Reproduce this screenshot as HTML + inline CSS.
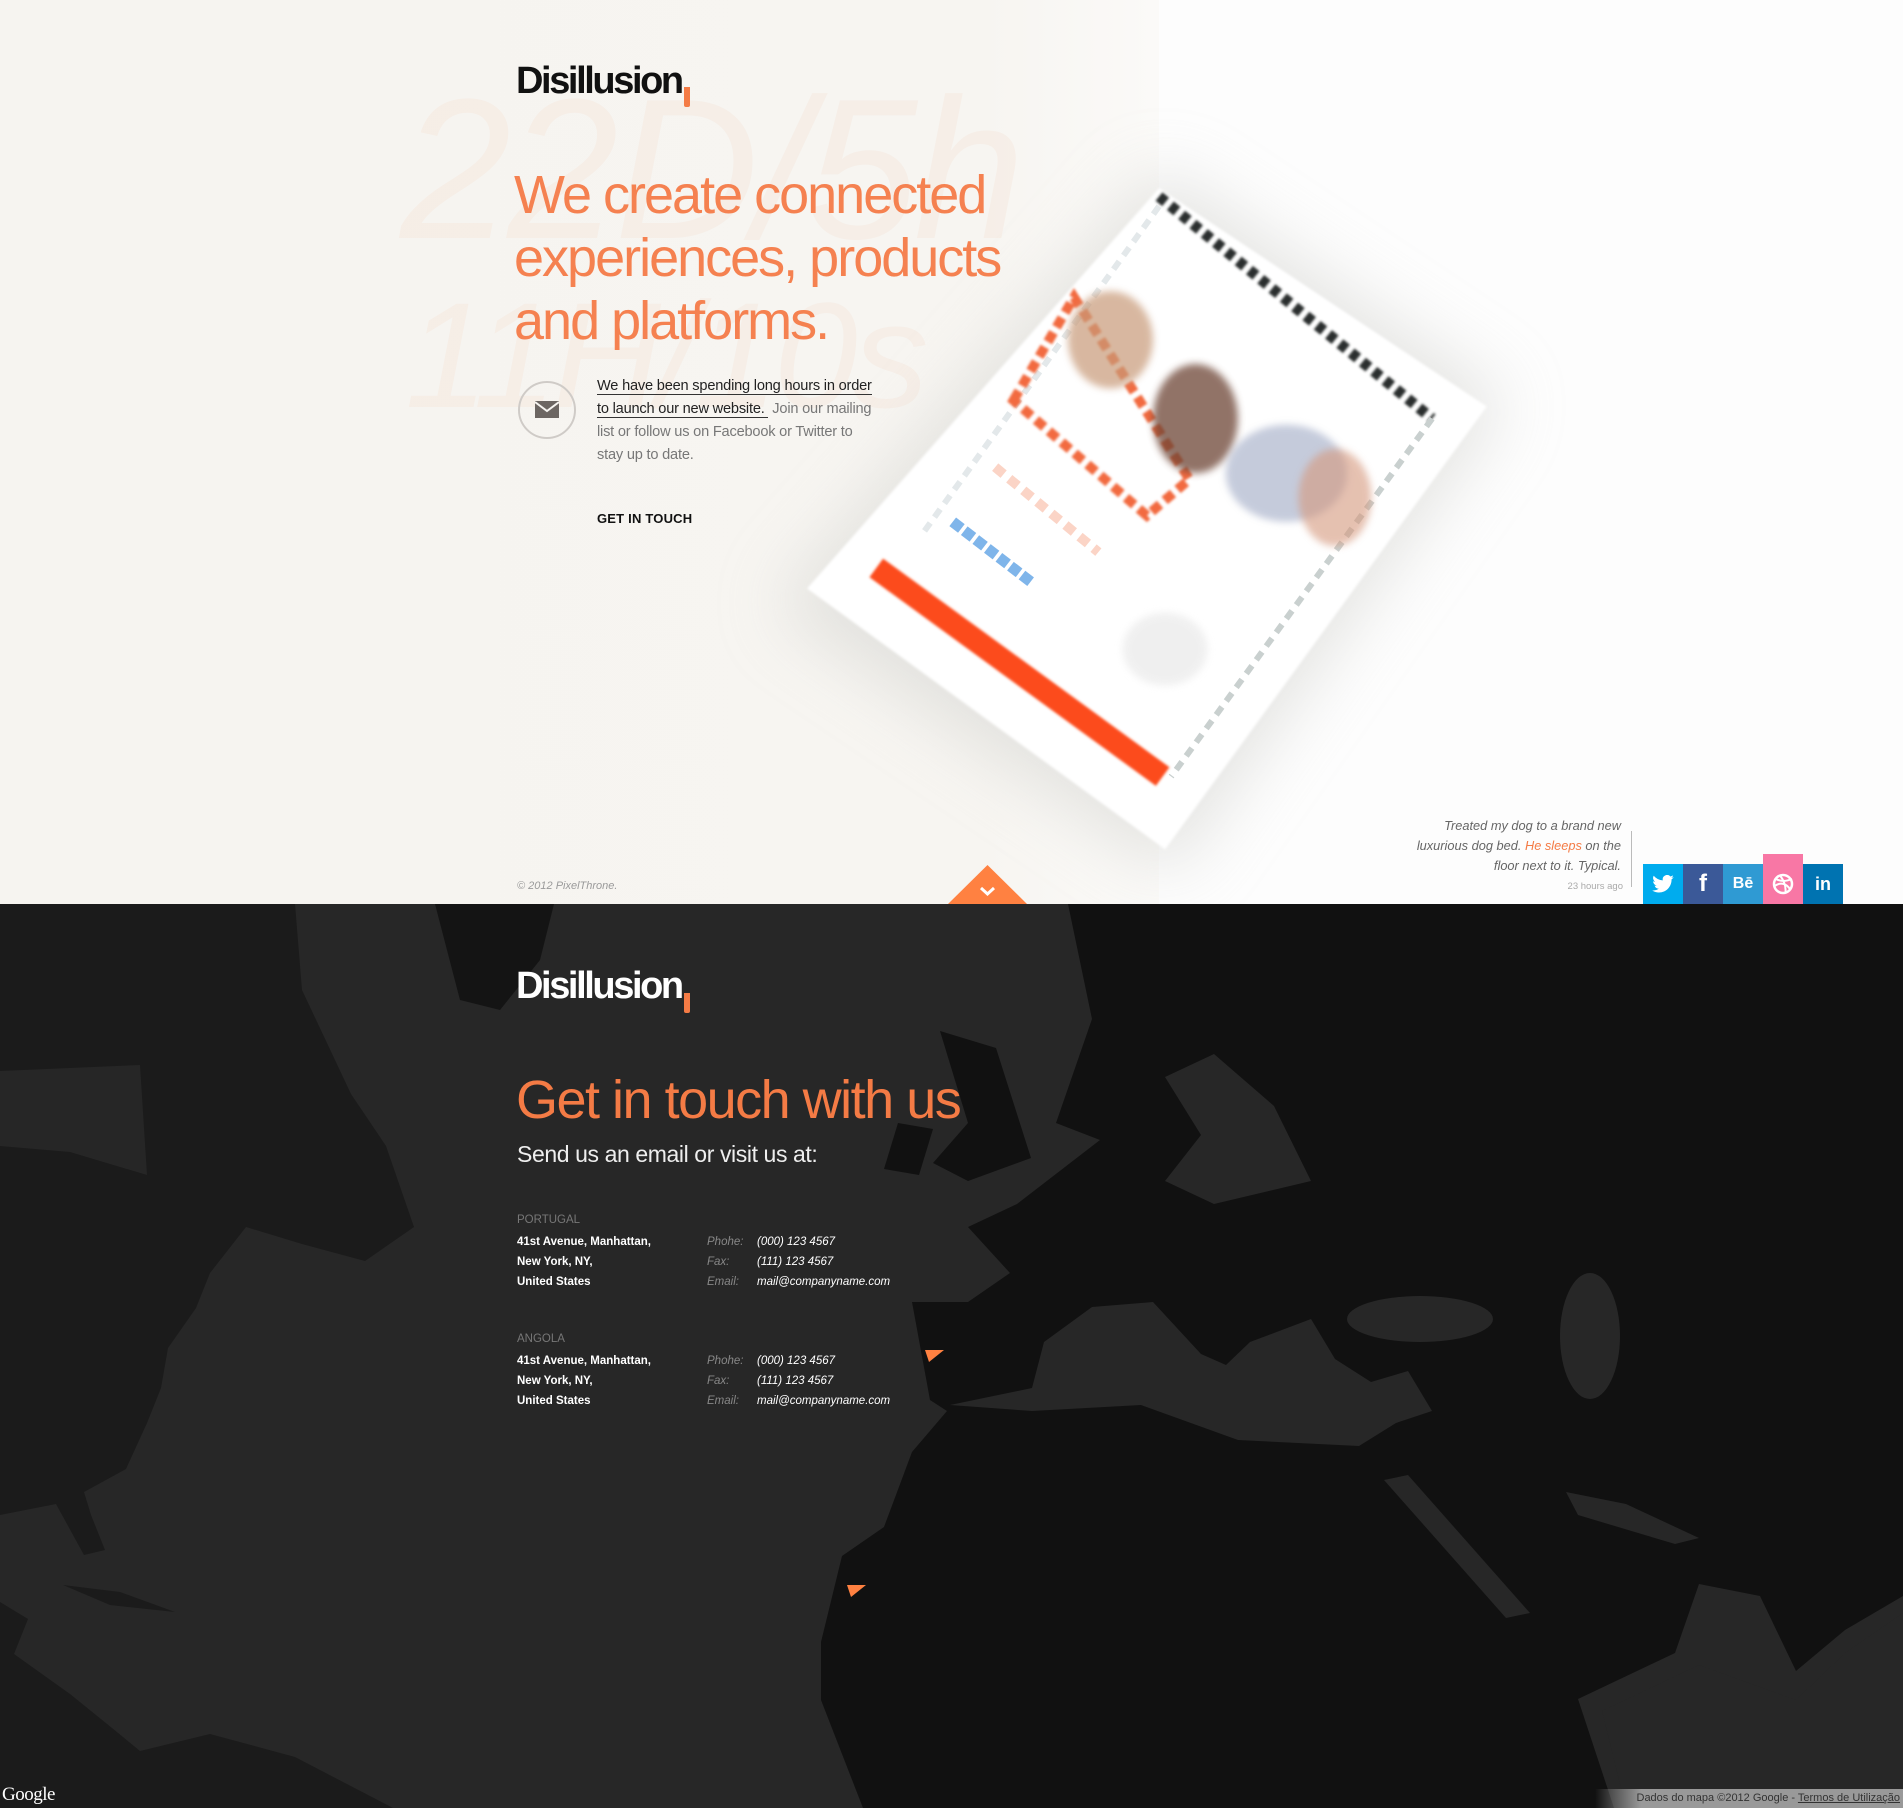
<!DOCTYPE html>
<html><head><meta charset="utf-8">
<style>
*{margin:0;padding:0;box-sizing:border-box}
html,body{width:1903px;height:1808px;overflow:hidden;background:#272727}
body{position:relative;font-family:"Liberation Sans",sans-serif}
.abs{position:absolute}
#top{position:absolute;left:0;top:0;width:1903px;height:904px;background:#fdfdfd;overflow:hidden}
.logo{font-weight:bold;font-size:38px;letter-spacing:-2.4px;line-height:1;white-space:nowrap}
.comma{position:absolute;width:6px;height:20px;background:#f47b45;border-radius:0 0 2px 2px}
.wm{position:absolute;font-style:italic;color:rgba(243,122,68,0.055);font-size:200px;line-height:1;white-space:nowrap;letter-spacing:-4px}
.h1{position:absolute;left:514px;color:#f58150;font-size:54px;letter-spacing:-2px;line-height:63px;white-space:nowrap}
.p{position:absolute;left:597px;top:375px;font-size:14.6px;line-height:23px;color:#777;letter-spacing:-0.2px;white-space:nowrap}
.p u{color:#222;text-decoration:none;border-bottom:1px solid #333}
.soc{position:absolute;width:40px;height:40px;top:864px;color:#fff;font-weight:bold;display:flex;align-items:center;justify-content:center;font-size:19px}
.tw{position:absolute;right:282px;text-align:right;font-style:italic;font-size:12.8px;color:#666;white-space:nowrap}
.lbl{position:absolute;font-size:11.5px;white-space:nowrap}
</style></head><body>

<div id="top">
  <div class="abs" style="left:0;top:0;width:1159px;height:904px;background:linear-gradient(90deg,#f6f4f0,#f7f5f1 85%,#fbfaf8)"></div>
  <div class="wm" style="left:400px;top:70px">22D/5h</div>
  <div class="wm" style="left:405px;top:280px;font-size:150px">11H/10s</div>

  <svg class="abs" style="left:0;top:0" width="1903" height="904" viewBox="0 0 1568 745" preserveAspectRatio="none">
    <defs>
      <filter id="bl" x="-50%" y="-50%" width="200%" height="200%"><feGaussianBlur stdDeviation="28"/></filter>
      <filter id="b2"><feGaussianBlur stdDeviation="3"/></filter>
      <filter id="b1"><feGaussianBlur stdDeviation="1.2"/></filter>
    </defs>
    <polygon points="955,140 1240,330 965,720 640,500" fill="#d9d9d6" opacity="0.7" filter="url(#bl)"/>
    <polygon points="955,155 1225,335 960,700 665,485" fill="#ffffff" filter="url(#b1)"/>
    <line x1="955" y1="162" x2="1180" y2="345" stroke="#2a2f2d" stroke-width="9" stroke-dasharray="7,5" filter="url(#b1)"/>
    <line x1="1180" y1="345" x2="965" y2="640" stroke="#c9d0cf" stroke-width="5" stroke-dasharray="8,6"/>
    <line x1="955" y1="170" x2="760" y2="440" stroke="#e3e8ea" stroke-width="5" stroke-dasharray="8,6"/>
    <polygon points="835,330 885,245 980,395 945,425" fill="none" stroke="#f26b3f" stroke-width="8" stroke-dasharray="9,5" filter="url(#b1)"/>
    <ellipse cx="915" cy="280" rx="35" ry="40" fill="#c89a78" opacity="0.7" filter="url(#b2)"/>
    <ellipse cx="985" cy="345" rx="35" ry="45" fill="#6d4436" opacity="0.75" filter="url(#b2)"/>
    <ellipse cx="1060" cy="390" rx="50" ry="40" fill="#9fa9c4" opacity="0.6" filter="url(#b2)"/>
    <ellipse cx="1100" cy="410" rx="30" ry="40" fill="#d5987d" opacity="0.6" filter="url(#b2)"/>
    <line x1="820" y1="385" x2="905" y2="455" stroke="#fbd4c6" stroke-width="8" stroke-dasharray="9,6"/>
    <line x1="785" y1="430" x2="850" y2="480" stroke="#7fb5ea" stroke-width="9" stroke-dasharray="9,3"/>
    <line x1="722" y1="468" x2="958" y2="640" stroke="#fc4b1c" stroke-width="19" filter="url(#b1)"/>
    <ellipse cx="960" cy="535" rx="35" ry="30" fill="#e6e6e6" opacity="0.6" filter="url(#b2)"/>
  </svg>

  <div class="abs logo" style="left:516px;top:62px;color:#111">Disillusion</div>
  <div class="comma" style="left:684px;top:87px"></div>

  <div class="h1" style="top:164px">We create connected</div>
  <div class="h1" style="top:227px">experiences, products</div>
  <div class="h1" style="top:290px">and platforms.</div>

  <div class="abs" style="left:518px;top:381px;width:58px;height:58px;border:2px solid #cfcbc7;border-radius:50%"></div>
  <svg class="abs" style="left:535px;top:401px" width="24" height="17" viewBox="0 0 24 17"><path d="M0 0H24V17H0Z" fill="#6c6662"/><path d="M0 1L12 10L24 1" fill="none" stroke="#f6f4f0" stroke-width="2"/></svg>

  <div class="p"><u>We have been spending long hours in order</u><br><u>to launch our new website.&nbsp;</u> Join our mailing<br>list or follow us on Facebook or Twitter to<br>stay up to date.</div>

  <div class="abs" style="left:597px;top:511px;font-size:13px;font-weight:bold;color:#111;letter-spacing:0.2px">GET IN TOUCH</div>
  <div class="abs" style="left:517px;top:880px;font-size:11px;font-style:italic;color:#9a9a9a">© 2012 PixelThrone.</div>

  <div class="tw" style="top:818px">Treated my dog to a brand new</div>
  <div class="tw" style="top:838px">luxurious dog bed. <span style="color:#f47b45">He sleeps</span> on the</div>
  <div class="tw" style="top:858px">floor next to it. Typical.</div>
  <div class="tw" style="top:881px;font-style:normal;font-size:9.5px;color:#aaa;right:280px">23 hours ago</div>
  <div class="abs" style="left:1631px;top:831px;width:1px;height:56px;background:#bbb"></div>

  <div class="soc" style="left:1643px;background:#00acee">
    <svg width="22" height="18" viewBox="0 0 24 20"><path d="M24 2.4a9.8 9.8 0 0 1-2.8.8A4.9 4.9 0 0 0 23.3.4a9.9 9.9 0 0 1-3.1 1.2A4.9 4.9 0 0 0 11.8 6 14 14 0 0 1 1.7.9a4.9 4.9 0 0 0 1.5 6.6A4.9 4.9 0 0 1 1 6.9a4.9 4.9 0 0 0 3.9 4.8 4.9 4.9 0 0 1-2.2.1 4.9 4.9 0 0 0 4.6 3.4A9.9 9.9 0 0 1 0 17.2 14 14 0 0 0 7.5 19.4c9.1 0 14-7.5 14-14v-.6A10 10 0 0 0 24 2.4z" fill="#fff"/></svg>
  </div>
  <div class="soc" style="left:1683px;background:#3b5998;font-size:24px">f</div>
  <div class="soc" style="left:1723px;background:#2f9ad3;font-size:16px">Bē</div>
  <div class="soc" style="left:1763px;top:854px;height:50px;background:#f877a5;padding-top:10px">
    <svg width="22" height="22" viewBox="0 0 22 22"><circle cx="11" cy="11" r="9" fill="none" stroke="#fff" stroke-width="2.5"/><path d="M4 6c5 3 11 2 16 0M2.5 13c6-4 12-3 16 4M8 2.5c4 5 6 11 5.5 17" fill="none" stroke="#fff" stroke-width="2"/></svg>
  </div>
  <div class="soc" style="left:1803px;background:#0073b1;font-size:18px">in</div>

  <svg class="abs" style="left:948px;top:865px" width="79" height="39" viewBox="0 0 79 39"><polygon points="39.5,0 79,39 0,39" fill="#ff8141"/><path d="M33 23l6.5 6 6.5-6" fill="none" stroke="#fff" stroke-width="3"/></svg>
</div>

<svg class="abs" style="left:0;top:904px" width="1903" height="904" viewBox="0 904 1903 904">
  <rect x="0" y="904" width="1903" height="904" fill="#272727"/>
  <polygon fill="#1b1b1b" points="0,904 295,904 302,990 351,1094 386,1146 414,1227 365,1261 302,1244 246,1227 210,1273 196,1308 168,1348 161,1388 147,1423 126,1469 84,1492 91,1515 105,1550 84,1555 56,1504 0,1515"/>
  <polygon fill="#262626" points="0,1071 140,1065 147,1175 70,1152 0,1146"/>
  <polygon fill="#1b1b1b" points="0,1602 28,1619 14,1654 70,1694 112,1728 140,1751 210,1734 295,1757 393,1808 0,1808"/>
  <polygon fill="#1b1b1b" points="63,1585 120,1592 175,1612 110,1605"/>
  <polygon fill="#141414" points="435,904 554,904 540,960 500,1010 460,1000"/>
  <polygon fill="#111111" points="1068,904 1903,904 1903,1596 1845,1630 1796,1671 1760,1596 1699,1584 1675,1653 1578,1699 1614,1808 863,1808 821,1700 821,1642 842,1556 884,1527 912,1452 947,1411 930,1400 912,1302 968,1302 1010,1273 968,1227 1017,1204 1100,1140 1056,1123 1092,1019"/>
  <polygon fill="#111111" points="940,1031 996,1048 1031,1158 968,1181 933,1163 968,1123"/>
  <polygon fill="#111111" points="898,1123 933,1129 919,1175 884,1169"/>
  <g fill="#272727">
    <polygon points="950,1405 1032,1388 1044,1342 1092,1307 1153,1302 1201,1354 1226,1365 1250,1342 1311,1319 1335,1359 1371,1382 1408,1371 1432,1411 1396,1423 1359,1446 1238,1440 1141,1405 1032,1411"/>
    <ellipse cx="1420" cy="1319" rx="73" ry="23"/>
    <ellipse cx="1590" cy="1336" rx="30" ry="63"/>
    <polygon points="1384,1480 1408,1475 1530,1613 1506,1618"/>
    <polygon points="1165,1077 1214,1054 1274,1106 1311,1181 1214,1204 1165,1181 1201,1135"/>
    <polygon points="1566,1492 1626,1504 1699,1538 1675,1544 1578,1515"/>
    <polygon points="1903,1613 1903,1808 1626,1808 1602,1711 1699,1665 1796,1700 1845,1653"/>
  </g>
</svg>

<div class="abs logo" style="left:516px;top:967px;color:#fff">Disillusion</div>
<div class="comma" style="left:684px;top:993px"></div>

<div class="abs" style="left:516px;top:1068px;font-size:54px;color:#f47b45;letter-spacing:-1.5px;white-space:nowrap;line-height:64px">Get in touch with us</div>
<div class="abs" style="left:517px;top:1141px;font-size:23px;color:#eee;letter-spacing:-0.4px;white-space:nowrap">Send us an email or visit us at:</div>

<div class="lbl" style="left:517px;top:1214px;color:#777">PORTUGAL</div>
<div class="lbl" style="left:517px;top:1232px;color:#fff;font-weight:bold;line-height:20px">41st Avenue, Manhattan,<br>New York, NY,<br>United States</div>
<div class="lbl" style="left:707px;top:1232px;color:#888;font-style:italic;line-height:20px">Phohe:<br>Fax:<br>Email:</div>
<div class="lbl" style="left:757px;top:1232px;color:#fff;font-style:italic;line-height:20px">(000) 123 4567<br>(111) 123 4567<br>mail@companyname.com</div>

<div class="lbl" style="left:517px;top:1333px;color:#777">ANGOLA</div>
<div class="lbl" style="left:517px;top:1351px;color:#fff;font-weight:bold;line-height:20px">41st Avenue, Manhattan,<br>New York, NY,<br>United States</div>
<div class="lbl" style="left:707px;top:1351px;color:#888;font-style:italic;line-height:20px">Phohe:<br>Fax:<br>Email:</div>
<div class="lbl" style="left:757px;top:1351px;color:#fff;font-style:italic;line-height:20px">(000) 123 4567<br>(111) 123 4567<br>mail@companyname.com</div>

<svg class="abs" style="left:925px;top:1350px" width="19" height="12"><polygon points="0,0 19,0 4,12" fill="#ff8141"/></svg>
<svg class="abs" style="left:847px;top:1585px" width="19" height="12"><polygon points="0,0 19,0 4,12" fill="#ff8141"/></svg>

<div class="abs" style="left:2px;top:1784px;font-family:'Liberation Serif',serif;font-size:19px;color:#fff;letter-spacing:-0.5px">Google</div>
<div class="abs" style="left:1595px;top:1789px;width:308px;height:19px;background:linear-gradient(90deg,rgba(153,153,153,0),#999 15%,#999);font-size:11px;color:#333;text-align:right;padding-right:3px;line-height:19px;white-space:nowrap">Dados do mapa ©2012 Google - <span style="text-decoration:underline">Termos de Utilização</span></div>
</body></html>
